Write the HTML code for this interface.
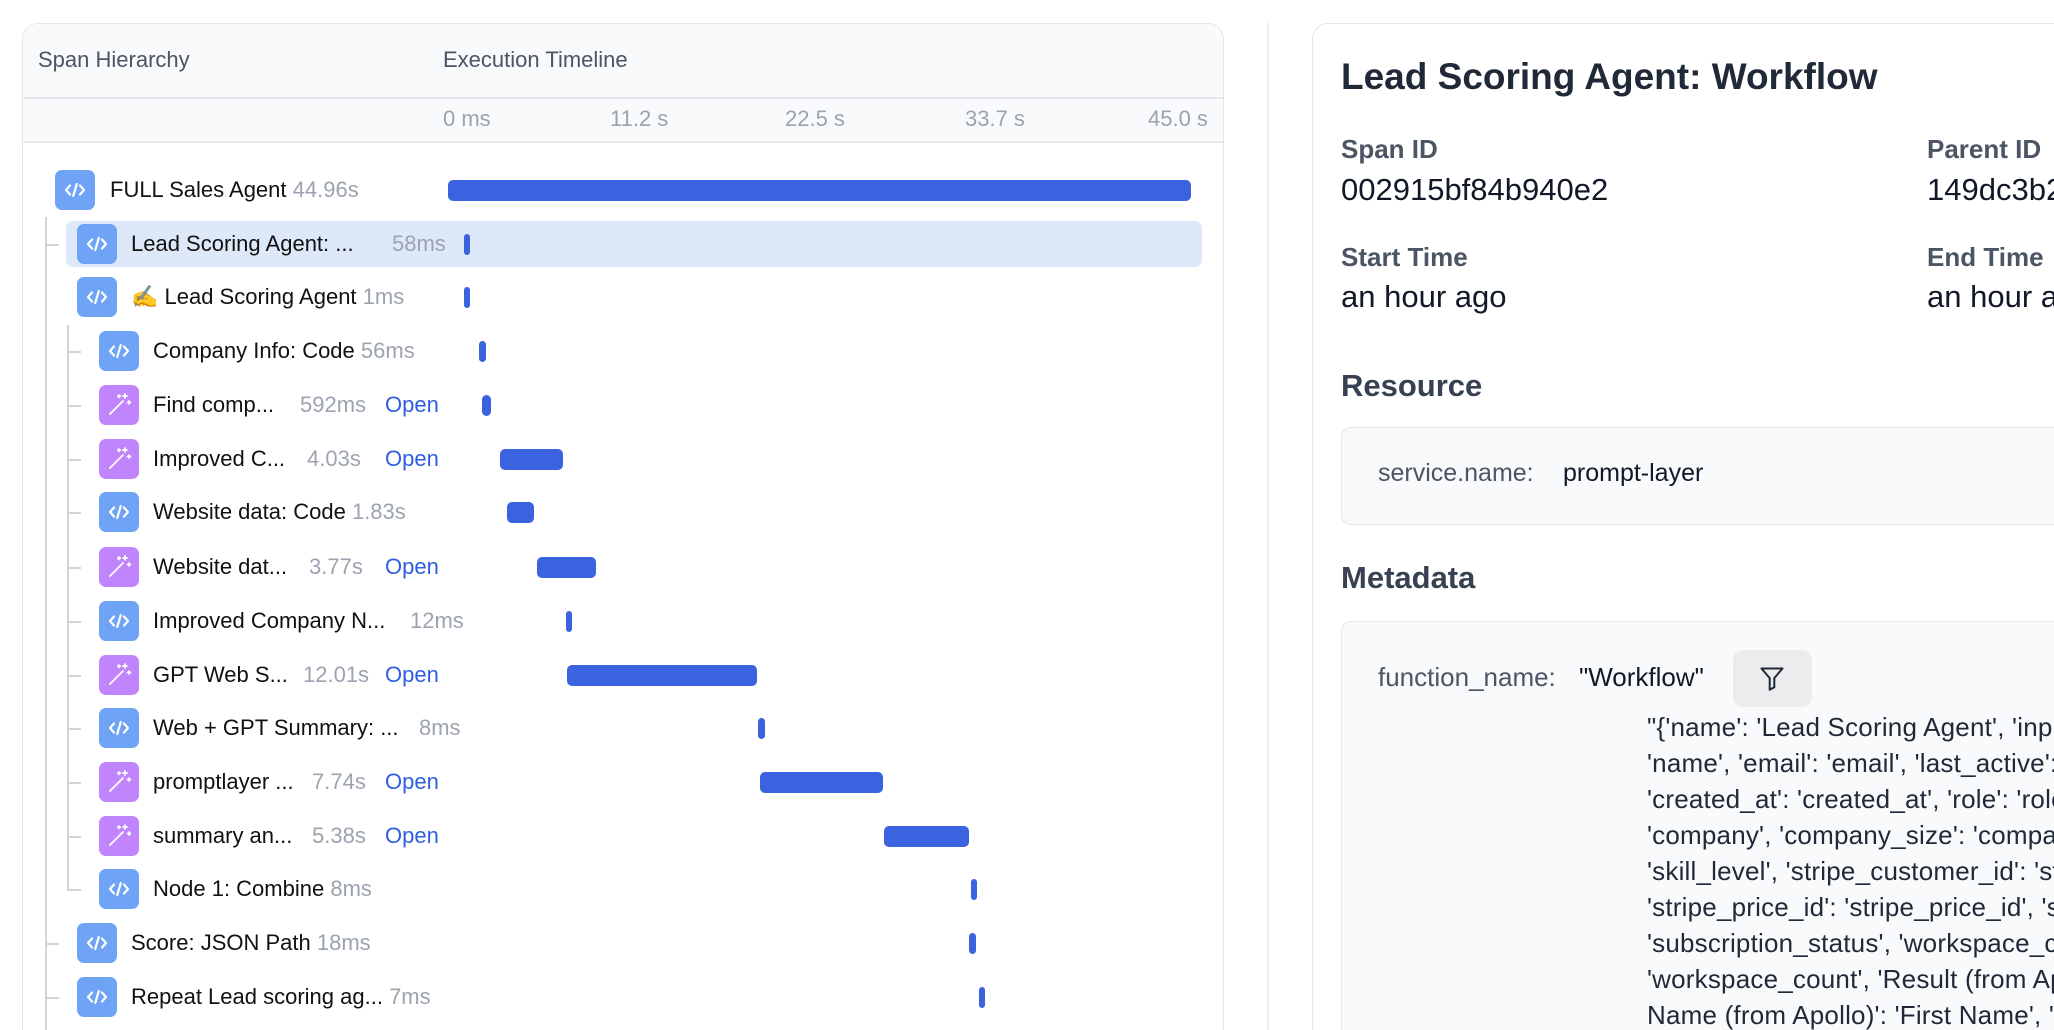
<!DOCTYPE html>
<html><head><meta charset="utf-8">
<style>
*{margin:0;padding:0;box-sizing:border-box}
html,body{width:2054px;height:1030px;overflow:hidden;background:#fff;font-family:"Liberation Sans",Arial,sans-serif;color:#111827}
#w{position:relative;width:2054px;height:1030px;overflow:hidden}
.a{position:absolute;white-space:nowrap}
.lp{position:absolute;left:22px;top:23px;width:1202px;height:1030px;border:1.5px solid #e5e7eb;border-radius:16px;overflow:hidden;background:#fff}
.hd{position:absolute;left:0;top:0;width:100%;height:117px;background:#f9fafb}
.ln{position:absolute;background:#e5e7eb}
.hdt{font-size:22px;color:#4b5563}
.tk{font-size:22px;color:#9ca3af}
.ic{position:absolute;width:40px;height:40px;border-radius:7px;background:#6ea3f6}
.ic.p{background:#c084fc}
.ic svg{position:absolute;left:0;top:0}
.nm{position:absolute;font-size:22px;color:#111;white-space:nowrap;line-height:24px}
.du{position:absolute;font-size:22px;color:#9ca3af;white-space:nowrap;line-height:24px}
.op{position:absolute;font-size:22px;color:#2f5fe0;white-space:nowrap;line-height:24px}
.bar{position:absolute;height:21px;border-radius:5px;background:#3b63e0}
.tl{position:absolute;background:#d1d5db}
.rp{position:absolute;left:1312px;top:23px;width:800px;height:1030px;border:1.5px solid #e5e7eb;border-radius:16px;background:#fff}
.lab{font-size:26px;font-weight:bold;color:#4b5563}
.val{font-size:31px;color:#111827}
.h2{font-size:31px;font-weight:bold;color:#374151}
.code{font-size:26px;letter-spacing:0.2px;color:#1f2937;line-height:36px}
</style></head><body><div id="w">

<div class="lp">
  <div class="hd"></div>
  <div class="ln" style="left:0;top:73px;width:100%;height:1.5px"></div>
  <div class="ln" style="left:0;top:117px;width:100%;height:1.5px"></div>
</div>
<div class="a hdt" style="left:38px;top:47px">Span Hierarchy</div>
<div class="a hdt" style="left:443px;top:47px">Execution Timeline</div>
<div class="a tk" style="left:443px;top:106px">0 ms</div>
<div class="a tk" style="left:610px;top:106px">11.2 s</div>
<div class="a tk" style="left:785px;top:106px">22.5 s</div>
<div class="a tk" style="left:965px;top:106px">33.7 s</div>
<div class="a tk" style="left:1148px;top:106px">45.0 s</div>

<div class="a" style="left:66px;top:221px;width:1136px;height:46px;background:#dde8f9;border-radius:7px"></div>

<div class="tl" style="left:45px;top:217px;width:1.5px;height:813px"></div>
<div class="tl" style="left:45px;top:244px;width:14px;height:1.5px"></div>
<div class="tl" style="left:45px;top:943px;width:14px;height:1.5px"></div>
<div class="tl" style="left:45px;top:997px;width:14px;height:1.5px"></div>
<div class="tl" style="left:67px;top:325px;width:1.5px;height:565px"></div>
<div class="tl" style="left:67px;top:351px;width:14px;height:1.5px"></div>
<div class="tl" style="left:67px;top:405px;width:14px;height:1.5px"></div>
<div class="tl" style="left:67px;top:459px;width:14px;height:1.5px"></div>
<div class="tl" style="left:67px;top:512px;width:14px;height:1.5px"></div>
<div class="tl" style="left:67px;top:567px;width:14px;height:1.5px"></div>
<div class="tl" style="left:67px;top:621px;width:14px;height:1.5px"></div>
<div class="tl" style="left:67px;top:675px;width:14px;height:1.5px"></div>
<div class="tl" style="left:67px;top:728px;width:14px;height:1.5px"></div>
<div class="tl" style="left:67px;top:782px;width:14px;height:1.5px"></div>
<div class="tl" style="left:67px;top:836px;width:14px;height:1.5px"></div>
<div class="tl" style="left:67px;top:889px;width:14px;height:1.5px"></div>

<svg width="0" height="0" style="position:absolute">
<defs>
<symbol id="code" viewBox="0 0 40 40"><g fill="none" stroke="#fff" stroke-width="2.2" stroke-linecap="round" stroke-linejoin="round"><path d="M15 15.5L11 20L15 24.5"/><path d="M25 15.5L29 20L25 24.5"/><path d="M21.8 14L18.2 26"/></g></symbol>
<symbol id="wand" viewBox="0 0 40 40"><g fill="none" stroke="#fff" stroke-width="1.8" stroke-linecap="round"><path d="M11 29L24 16"/><path d="M26 9v4M24 11h4"/><path d="M30 16v3M28.5 17.5h3"/><path d="M20 10v2.5M18.8 11.2h2.5"/></g></symbol>
</defs></svg>

<div class="ic" style="left:55px;top:170px"><svg width="40" height="40"><use href="#code"/></svg></div>
<div class="nm" style="left:110px;top:178px">FULL Sales Agent <span style="color:#9ca3af">44.96s</span></div>
<div class="bar" style="left:448px;top:180px;width:743px"></div>

<div class="ic" style="left:77px;top:224px"><svg width="40" height="40"><use href="#code"/></svg></div>
<div class="nm" style="left:131px;top:232px">Lead Scoring Agent: ...</div>
<div class="du" style="left:392px;top:232px">58ms</div>
<div class="bar" style="left:464px;top:234px;width:6px"></div>

<div class="ic" style="left:77px;top:277px"><svg width="40" height="40"><use href="#code"/></svg></div>
<div class="nm" style="left:131px;top:285px">✍️ Lead Scoring Agent <span style="color:#9ca3af">1ms</span></div>
<div class="bar" style="left:464px;top:287px;width:6px"></div>

<div class="ic" style="left:99px;top:331px"><svg width="40" height="40"><use href="#code"/></svg></div>
<div class="nm" style="left:153px;top:339px">Company Info: Code <span style="color:#9ca3af">56ms</span></div>
<div class="bar" style="left:479px;top:341px;width:7px"></div>

<div class="ic p" style="left:99px;top:385px"><svg width="40" height="40"><use href="#wand"/></svg></div>
<div class="nm" style="left:153px;top:393px">Find comp...</div>
<div class="du" style="left:300px;top:393px">592ms</div>
<div class="op" style="left:385px;top:393px">Open</div>
<div class="bar" style="left:482px;top:395px;width:9px"></div>

<div class="ic p" style="left:99px;top:439px"><svg width="40" height="40"><use href="#wand"/></svg></div>
<div class="nm" style="left:153px;top:447px">Improved C...</div>
<div class="du" style="left:307px;top:447px">4.03s</div>
<div class="op" style="left:385px;top:447px">Open</div>
<div class="bar" style="left:500px;top:449px;width:63px"></div>

<div class="ic" style="left:99px;top:492px"><svg width="40" height="40"><use href="#code"/></svg></div>
<div class="nm" style="left:153px;top:500px">Website data: Code <span style="color:#9ca3af">1.83s</span></div>
<div class="bar" style="left:507px;top:502px;width:27px"></div>

<div class="ic p" style="left:99px;top:547px"><svg width="40" height="40"><use href="#wand"/></svg></div>
<div class="nm" style="left:153px;top:555px">Website dat...</div>
<div class="du" style="left:309px;top:555px">3.77s</div>
<div class="op" style="left:385px;top:555px">Open</div>
<div class="bar" style="left:537px;top:557px;width:59px"></div>

<div class="ic" style="left:99px;top:601px"><svg width="40" height="40"><use href="#code"/></svg></div>
<div class="nm" style="left:153px;top:609px">Improved Company N...</div>
<div class="du" style="left:410px;top:609px">12ms</div>
<div class="bar" style="left:566px;top:611px;width:6px"></div>

<div class="ic p" style="left:99px;top:655px"><svg width="40" height="40"><use href="#wand"/></svg></div>
<div class="nm" style="left:153px;top:663px">GPT Web S...</div>
<div class="du" style="left:303px;top:663px">12.01s</div>
<div class="op" style="left:385px;top:663px">Open</div>
<div class="bar" style="left:567px;top:665px;width:190px"></div>

<div class="ic" style="left:99px;top:708px"><svg width="40" height="40"><use href="#code"/></svg></div>
<div class="nm" style="left:153px;top:716px">Web + GPT Summary: ...</div>
<div class="du" style="left:419px;top:716px">8ms</div>
<div class="bar" style="left:758px;top:718px;width:7px"></div>

<div class="ic p" style="left:99px;top:762px"><svg width="40" height="40"><use href="#wand"/></svg></div>
<div class="nm" style="left:153px;top:770px">promptlayer ...</div>
<div class="du" style="left:312px;top:770px">7.74s</div>
<div class="op" style="left:385px;top:770px">Open</div>
<div class="bar" style="left:760px;top:772px;width:123px"></div>

<div class="ic p" style="left:99px;top:816px"><svg width="40" height="40"><use href="#wand"/></svg></div>
<div class="nm" style="left:153px;top:824px">summary an...</div>
<div class="du" style="left:312px;top:824px">5.38s</div>
<div class="op" style="left:385px;top:824px">Open</div>
<div class="bar" style="left:884px;top:826px;width:85px"></div>

<div class="ic" style="left:99px;top:869px"><svg width="40" height="40"><use href="#code"/></svg></div>
<div class="nm" style="left:153px;top:877px">Node 1: Combine <span style="color:#9ca3af">8ms</span></div>
<div class="bar" style="left:971px;top:879px;width:6px"></div>

<div class="ic" style="left:77px;top:923px"><svg width="40" height="40"><use href="#code"/></svg></div>
<div class="nm" style="left:131px;top:931px">Score: JSON Path <span style="color:#9ca3af">18ms</span></div>
<div class="bar" style="left:969px;top:933px;width:7px"></div>

<div class="ic" style="left:77px;top:977px"><svg width="40" height="40"><use href="#code"/></svg></div>
<div class="nm" style="left:131px;top:985px">Repeat Lead scoring ag... <span style="color:#9ca3af">7ms</span></div>
<div class="bar" style="left:979px;top:987px;width:6px"></div>

<div class="a" style="left:1267px;top:23px;width:1.5px;height:1007px;background:#ececef"></div>

<div class="rp"></div>
<div class="a" style="left:1341px;top:56px;font-size:37px;font-weight:bold;color:#1f2937">Lead Scoring Agent: Workflow</div>
<div class="a lab" style="left:1341px;top:134px">Span ID</div>
<div class="a val" style="left:1341px;top:172px">002915bf84b940e2</div>
<div class="a lab" style="left:1927px;top:134px">Parent ID</div>
<div class="a val" style="left:1927px;top:172px">149dc3b2a1f0c7d4</div>
<div class="a lab" style="left:1341px;top:242px">Start Time</div>
<div class="a val" style="left:1341px;top:279px">an hour ago</div>
<div class="a lab" style="left:1927px;top:242px">End Time</div>
<div class="a val" style="left:1927px;top:279px">an hour ago</div>
<div class="a h2" style="left:1341px;top:368px">Resource</div>
<div class="a" style="left:1341px;top:427px;width:760px;height:98px;background:#f9fafb;border:1.5px solid #e5e7eb;border-radius:10px"></div>
<div class="a" style="left:1378px;top:459px;font-size:25px;color:#4b5563">service.name:</div>
<div class="a" style="left:1563px;top:459px;font-size:25px;color:#111827">prompt-layer</div>
<div class="a h2" style="left:1341px;top:560px">Metadata</div>
<div class="a" style="left:1341px;top:621px;width:760px;height:450px;background:#f9fafb;border:1.5px solid #e5e7eb;border-radius:10px"></div>
<div class="a" style="left:1378px;top:662px;font-size:26px;color:#4b5563">function_name:</div>
<div class="a" style="left:1579px;top:662px;font-size:26px;color:#111827">"Workflow"</div>
<div class="a" style="left:1733px;top:650px;width:79px;height:57px;background:#ececee;border-radius:10px">
<svg width="79" height="57" viewBox="0 0 79 57"><path d="M28.5 18.5h21l-8.2 9.6v9.2l-4.6 2.5v-11.7z" fill="none" stroke="#1f2937" stroke-width="2" stroke-linejoin="round"/></svg></div>
<div class="a code" style="left:1647px;top:709px">"{'name': 'Lead Scoring Agent', 'input_variables': {'name':<br>'name', 'email': 'email', 'last_active': 'last_active',<br>'created_at': 'created_at', 'role': 'role', 'company':<br>'company', 'company_size': 'company_size', 'skill_level':<br>'skill_level', 'stripe_customer_id': 'stripe_customer_id',<br>'stripe_price_id': 'stripe_price_id', 'subscription_status':<br>'subscription_status', 'workspace_count':<br>'workspace_count', 'Result (from Apollo)': 'Result', 'First<br>Name (from Apollo)': 'First Name', 'Last Name':</div>
</div></body></html>
